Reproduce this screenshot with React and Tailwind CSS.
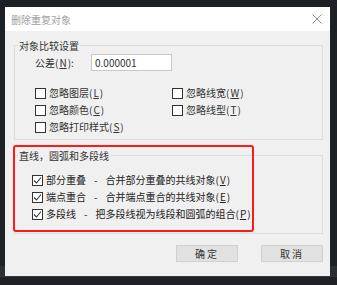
import React from 'react';

const font = { fontFamily: '"Noto Sans CJK SC", "Liberation Sans", sans-serif' };

const Box = ({ checked }) => (
  <span className="w-[11px] h-[11px] border border-[#333] bg-white flex items-center justify-center shrink-0">
    {checked && (
      <svg width="9" height="9" viewBox="0 0 9 9">
        <path d="M1 4.5 L3.5 7 L8 1.5" fill="none" stroke="#333" strokeWidth="1.1" />
      </svg>
    )}
  </span>
);

const Check = ({ label, checked, className = '' }) => (
  <div className={`flex items-center gap-[3px] h-[16px] ${className}`}>
    <Box checked={checked} />
    <span className="leading-none whitespace-nowrap">{label}</span>
  </div>
);

const Key = ({ k }) => (
  <>
    (<u className="mx-[1px]">{k}</u>)
  </>
);

const Dash = () => <span className="mx-[8px]">-</span>;

const Button = ({ children }) => (
  <button className="w-[62px] h-[17px] bg-[#e1e1e1] border border-[#d0d0d0] text-[10px] tracking-[2px] text-[#333] leading-none flex items-center justify-center">
    {children}
  </button>
);

export default function App() {
  return (
    <div className="relative w-[337px] h-[285px] overflow-hidden" style={font}>
      {/* desktop background */}
      <div className="flex flex-col h-full">
        <div className="h-[266px] bg-[#1d2025]" />
        <div className="h-[10px] bg-[#2b2e33]" />
        <div className="flex-1 bg-[#1f2125] border-t border-[#33363b]" />
      </div>

      {/* dialog window */}
      <div className="absolute left-[5px] top-[7px] w-[325px] h-[269px] bg-[#f0f0f0] flex flex-col">
        <div className="h-[24px] bg-white flex items-center justify-between pl-[6px] pr-[8px]">
          <span className="text-[10px] text-[#a0a0a0]">删除重复对象</span>
          <svg width="10" height="10" viewBox="0 0 10 10">
            <path d="M0.5 0.5 L9.5 9.5 M9.5 0.5 L0.5 9.5" stroke="#8a8a8a" strokeWidth="1" />
          </svg>
        </div>

        <div className="flex-1 flex flex-col pl-[9px] pr-[7px] pt-[14px]">
          {/* group 1 */}
          <div className="relative border border-[#dcdcdc] h-[95px] text-[10px] text-[#333]">
            <span className="absolute -top-[7px] left-[3px] bg-[#f0f0f0] px-[1px] leading-[13px]">对象比较设置</span>
            <div className="flex items-center mt-[8px] pl-[20px]">
              <span className="w-[56px]">公差<Key k="N" />:</span>
              <div className="w-[81px] h-[17px] bg-white border border-[#c8c8c8] flex items-center pl-[3px]">0.000001</div>
            </div>
            <div className="flex mt-[14px] pl-[20px]">
              <div className="w-[137px] flex flex-col gap-[1px]">
                <Check label={<>忽略图层<Key k="L" /></>} />
                <Check label={<>忽略颜色<Key k="C" /></>} />
                <Check label={<>忽略打印样式<Key k="S" /></>} />
              </div>
              <div className="flex flex-col gap-[1px]">
                <Check label={<>忽略线宽<Key k="W" /></>} />
                <Check label={<>忽略线型<Key k="T" /></>} />
              </div>
            </div>
          </div>

          {/* group 2 */}
          <div className="relative border border-[#dcdcdc] h-[79px] mt-[15px] text-[#222]">
            <span className="absolute -top-[7px] left-[3px] bg-[#f0f0f0] px-[1px] text-[10px] text-[#333] leading-[13px]">直线，圆弧和多段线</span>
            <div className="flex flex-col gap-[1px] pt-[16px] pl-[17px] text-[10px]">
              <Check checked label={<>部分重叠<Dash />合并部分重叠的共线对象<Key k="V" /></>} />
              <Check checked label={<>端点重合<Dash />合并端点重合的共线对象<Key k="E" /></>} />
              <Check checked label={<>多段线<Dash />把多段线视为线段和圆弧的组合<Key k="P" /></>} />
            </div>
            {/* red annotation */}
            <div className="absolute -left-[2px] -top-[11px] w-[241px] h-[87px] border-2 border-[#ff1a1a] rounded-[3px] pointer-events-none" />
          </div>

          <div className="flex justify-end gap-[23px] mt-[11px]">
            <Button>确定</Button>
            <Button>取消</Button>
          </div>
        </div>
      </div>
    </div>
  );
}
